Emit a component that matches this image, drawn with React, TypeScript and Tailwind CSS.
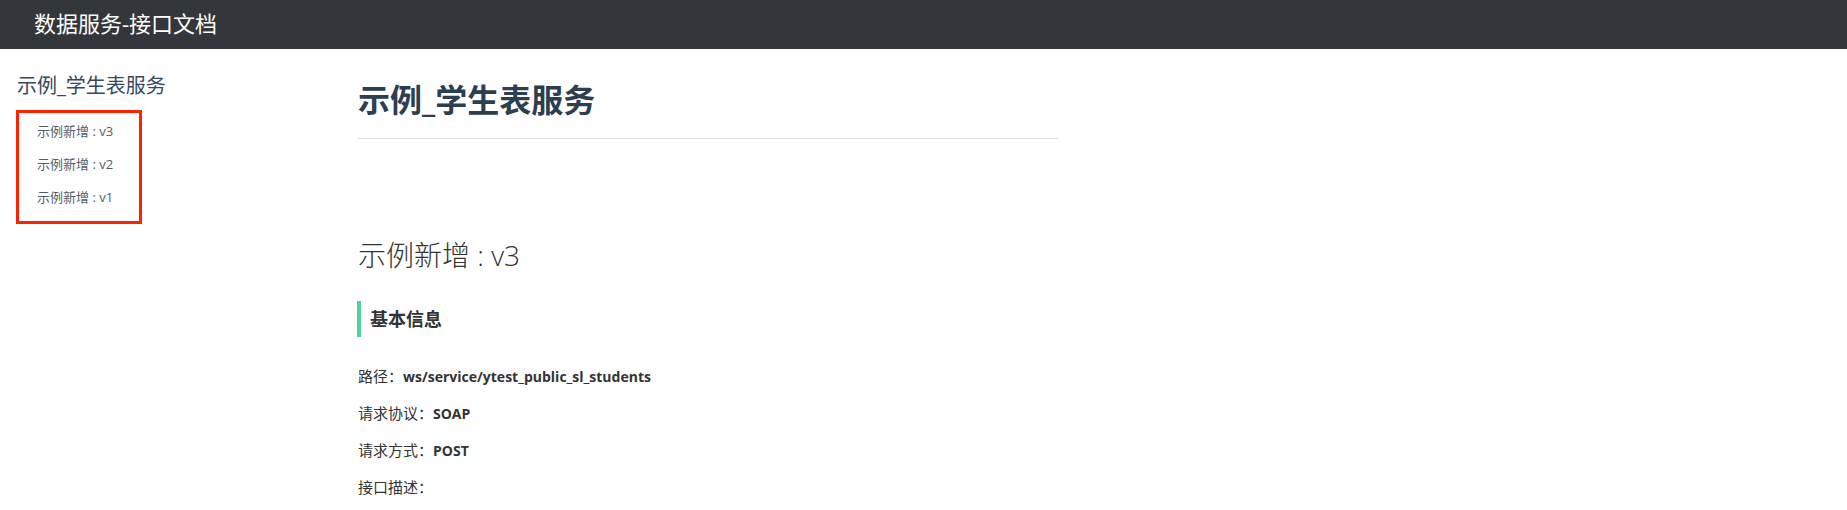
import React from "react";

const FONT = '"Open Sans", "Noto Sans CJK SC", sans-serif';

export default function App() {
  const items = ["示例新增 : v3", "示例新增 : v2", "示例新增 : v1"];
  return (
    <div className="min-h-screen bg-white" style={{ fontFamily: FONT }}>
      <header className="h-[49px] bg-[#33363b] flex items-center pl-[34px]">
        <span className="text-[22px] leading-[28px] text-white -mt-[3px]">数据服务-接口文档</span>
      </header>
      <div className="flex">
        <aside className="w-[300px] shrink-0 pl-[17px] pt-[23px]">
          <div className="text-[20px] leading-[28px] text-[#34495e]">示例_学生表服务</div>
          <div className="mt-[10px] -ml-[1px] w-[126px] border-[3px] border-[#ff2200] pl-[18px] pt-[2px] pb-[7px]">
            {items.map((t) => (
              <div key={t} className="h-[33px] leading-[33px] text-[13px] text-[#505d6b]">
                {t}
              </div>
            ))}
          </div>
        </aside>
        <main className="pl-[58px] flex-1">
          <div className="w-[700px]">
            <h1 className="pt-[31px] pb-[18px] text-[32px] leading-[40px] font-bold text-[#2c3e50] border-b border-[#dddddd]">
              示例_学生表服务
            </h1>
            <h2 className="mt-[98px] text-[28px] leading-[36px] font-light text-[#333333]">示例新增 : v3</h2>
            <div className="mt-[28px] -ml-[1px] h-[36px] border-l-4 border-[#4fd39a] pl-[9px] flex items-center">
              <span className="text-[18px] font-bold text-[#333333] leading-[24px]">基本信息</span>
            </div>
            <div className="mt-[21px] text-[15px] text-[#333333]">
              <div className="leading-[36px]">
                路径：<span className="font-bold text-[14px]">ws/service/ytest_public_sl_students</span>
              </div>
              <div className="leading-[36px]">
                请求协议：<span className="font-bold text-[14px]">SOAP</span>
              </div>
              <div className="leading-[36px]">
                请求方式：<span className="font-bold text-[14px]">POST</span>
              </div>
              <div className="leading-[36px]">接口描述：</div>
            </div>
          </div>
        </main>
      </div>
    </div>
  );
}
